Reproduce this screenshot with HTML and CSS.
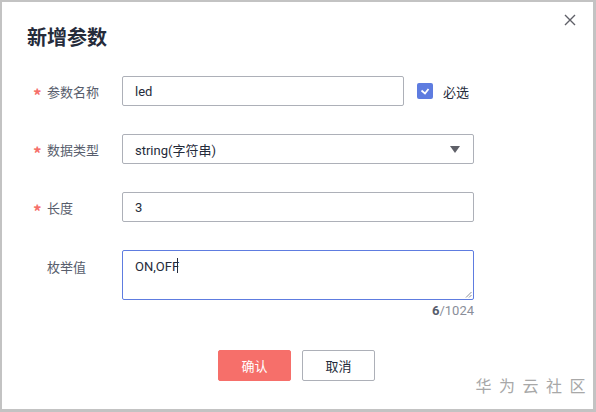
FILE: index.html
```html
<!DOCTYPE html>
<html>
<head>
<meta charset="utf-8">
<link rel="stylesheet" href="styles.css">
</head>
<body>
<div class="frame">
  <div class="dialog">
    <div class="header">
      <h1 class="title">新增参数</h1>
      <svg class="close" width="12" height="12" viewBox="0 0 12 12"><path d="M1 1L11 11M11 1L1 11" stroke="#5f6068" stroke-width="1.4" fill="none"/></svg>
    </div>
    <div class="form">
      <div class="row">
        <div class="label"><span class="star">*</span>参数名称</div>
        <div class="control short"><div class="input">led</div></div>
        <div class="check">
          <span class="box"><svg width="10" height="8" viewBox="0 0 10 8"><path d="M1.5 3.5L5 6.5L8.5 2" stroke="#fff" stroke-width="1.8" fill="none"/></svg></span>
          <span>必选</span>
        </div>
      </div>
      <div class="row">
        <div class="label"><span class="star">*</span>数据类型</div>
        <div class="control"><div class="input select">string(字符串)<span class="caret"></span></div></div>
      </div>
      <div class="row">
        <div class="label"><span class="star">*</span>长度</div>
        <div class="control"><div class="input">3</div></div>
      </div>
      <div class="row top">
        <div class="label"><span class="star hidden">*</span>枚举值</div>
        <div class="control">
          <div class="textarea">ON,OFF<span class="cursor"></span>
            <svg class="grip" width="7" height="7" viewBox="0 0 7 7"><path d="M6.5 1L1 6.5M6.5 4L4 6.5" stroke="#8a8e99" stroke-width="1" fill="none"/></svg>
          </div>
          <div class="count"><b>6</b>/1024</div>
        </div>
      </div>
    </div>
    <div class="footer">
      <button class="btn primary">确认</button>
      <button class="btn">取消</button>
    </div>
    <div class="mark">华为云社区</div>
  </div>
</div>
</body>
</html>
```
FILE: styles.css
```css
* { box-sizing: border-box; }
html, body { margin: 0; padding: 0; }
body {
  width: 596px; height: 412px;
  font-family: Roboto, "Noto Sans CJK SC", sans-serif;
  font-size: 13px;
  color: #252b3a;
  background: #fff;
}
.frame {
  width: 596px; height: 412px;
  border-top: 2px solid #c3c3c3;
  border-left: 2px solid #c3c3c3;
  border-right: 3px solid #c3c3c3;
  border-bottom: 3px solid #c3c3c3;
}
.dialog {
  position: relative;
  height: 100%;
  padding: 0 0 0 25px;
}
.header {
  display: flex;
  justify-content: space-between;
  align-items: flex-start;
  height: 74px;
}
.title {
  margin: 21px 0 0 0;
  font-family: "Noto Sans CJK SC", sans-serif;
  font-size: 20px;
  font-weight: 700;
  line-height: 28px;
  color: #252b3a;
}
.close { margin: 12px 17px 0 0; }
.form { display: flex; flex-direction: column; }
.row {
  display: flex;
  align-items: center;
  height: 30px;
  margin-bottom: 28px;
}
.row.top { align-items: flex-start; height: auto; margin-bottom: 0; }
.label {
  width: 95px;
  padding-left: 6px;
  color: #575d6c;
  font-family: "Noto Sans CJK SC", sans-serif;
  font-size: 13px;
  display: flex;
  align-items: center;
}
.row.top .label { padding-top: 7px; }
.star {
  color: #f66f6a;
  width: 14px;
  font-size: 17px;
  font-weight: 700;
  line-height: 1;
  position: relative;
  top: 3px;
}
.star.hidden { visibility: hidden; }
.control { width: 352px; }
.control.short { width: 282px; }
.input {
  height: 30px;
  border: 1px solid #adb0b8;
  border-radius: 2px;
  padding: 0 12px;
  display: flex;
  align-items: center;
  color: #252b3a;
  font-size: 13px;
  position: relative;
}
.select { justify-content: space-between; }
.caret {
  width: 0; height: 0;
  border-left: 5px solid transparent;
  border-right: 5px solid transparent;
  border-top: 7px solid #5f6068;
  margin-right: 1px;
}
.check {
  display: flex;
  align-items: center;
  margin-left: 13px;
  gap: 10px;
  color: #252b3a;
  font-family: "Noto Sans CJK SC", sans-serif;
}
.box {
  width: 16px; height: 16px;
  background: #5e7ce0;
  border-radius: 2px;
  display: flex;
  align-items: center;
  justify-content: center;
}
.textarea {
  position: relative;
  height: 50px;
  border: 1px solid #5e7ce0;
  border-radius: 2px;
  padding: 6px 12px;
  line-height: 20px;
  color: #252b3a;
}
.cursor {
  display: inline-block;
  width: 1px; height: 15px;
  background: #252b3a;
  vertical-align: -2px;
  margin-left: -2px;
}
.grip { position: absolute; right: 1px; bottom: 1px; }
.count {
  text-align: right;
  color: #8a8e99;
  font-size: 13px;
  margin-top: 3px;
  line-height: 16px;
}
.count b { color: #575d6c; font-weight: 700; }
.footer {
  display: flex;
  justify-content: center;
  gap: 11px;
  margin-top: 31px;
  padding-right: 27px;
}
.btn {
  width: 73px; height: 31px;
  border: 1px solid #adb0b8;
  border-radius: 2px;
  background: #fff;
  font-family: "Noto Sans CJK SC", sans-serif;
  font-size: 13px;
  color: #252b3a;
  padding: 0;
}
.btn.primary {
  background: #f66f6a;
  border-color: #f66f6a;
  color: #fff;
}
.mark {
  position: absolute;
  right: 0;
  bottom: 12px;
  font-family: "Noto Sans CJK SC", sans-serif;
  font-size: 16px;
  letter-spacing: 7.5px;
  color: #a8a8a8;
}
```
